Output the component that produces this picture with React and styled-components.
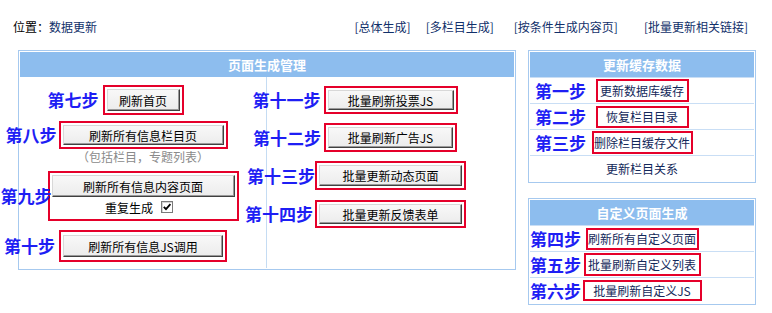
import styled, { createGlobalStyle } from 'styled-components'

const GlobalStyle = createGlobalStyle`
  body {
    margin: 0;
    background: #fff;
    font-family: "Noto Sans CJK SC", "Liberation Sans", sans-serif;
    font-size: 12px;
    color: #000;
  }
`

const Page = styled.div`
  width: 772px;
  height: 313px;
  overflow: hidden;
`

const TopBar = styled.div`
  display: flex;
  align-items: center;
  justify-content: space-between;
  height: 14px;
  margin: 20px 0 16px;
  padding: 0 24px 0 13px;
  line-height: 14px;
`

const Where = styled.div`
  color: #000;
  span {
    color: #11306a;
  }
`

const Links = styled.div`
  display: flex;
`

const TopLink = styled.a`
  color: #11306a;
  text-decoration: none;
  margin-left: ${props => props.$ml || 0}px;
`

const Main = styled.div`
  display: flex;
  align-items: flex-start;
  gap: 12px;
  padding-left: 18px;
`

const Panel = styled.div`
  width: ${props => props.$w}px;
  box-sizing: border-box;
  border: 1px solid #a6c9ef;
  padding: 1px;
  background: #fff;
`

const Header = styled.div`
  height: 25px;
  line-height: 25px;
  background: #8dbdee;
  color: #fff;
  font-weight: bold;
  font-size: 13px;
  text-align: center;
`

const Body = styled.div`
  display: grid;
  grid-template-columns: 247px 1fr;
  height: 191px;
`

const Column = styled.div`
  display: flex;
  flex-direction: column;
  align-items: center;
  box-sizing: border-box;
  border-right: ${props => props.$divider ? '1px solid #c5dcf3' : 'none'};
`

const StepRow = styled.div`
  display: flex;
  align-items: center;
  justify-content: center;
  margin-top: ${props => props.$mt}px;
`

// 标注文字挂在红框左边，不占宽度，红框保持居中
const StepLabel = styled.span`
  position: relative;
  z-index: 1;
  flex: none;
  width: ${props => props.$chars * 17}px;
  margin-left: ${props => -(props.$chars * 17 + props.$gap)}px;
  margin-right: ${props => props.$gap}px;
  font-size: 17px;
  font-weight: bold;
  line-height: 20px;
  color: #1e1ef4;
  white-space: nowrap;
`

const RedBox = styled.div`
  border: 2px solid #e5002a;
  padding: ${props => props.$py || 2}px 2px;
  display: flex;
  flex-direction: column;
`

const Button = styled.button`
  width: ${props => props.$w}px;
  height: ${props => props.$h}px;
  margin: 0;
  padding: 0;
  font-family: inherit;
  font-size: 12px;
  color: #000;
  background: linear-gradient(#f8f8f8, #ececec);
  border: 1px solid;
  border-color: #d8d8d8 #404040 #404040 #d8d8d8;
  box-shadow: inset -1px -1px 0 #9a9a9a;
  cursor: pointer;
`

const Note = styled.div`
  height: 16px;
  line-height: 16px;
  color: #8a8a8a;
`

const CheckRow = styled.div`
  display: flex;
  align-items: center;
  justify-content: center;
  gap: 8px;
  height: 20px;
  padding-right: 8px;
`

const CheckBox = styled.span`
  display: inline-flex;
  align-items: center;
  justify-content: center;
  width: 12px;
  height: 12px;
  box-sizing: border-box;
  border: 1px solid #7a7a7a;
  background: #fff;
  box-shadow: inset 1px 1px 0 #d4d4d4;
`

const Side = styled.div`
  display: flex;
  flex-direction: column;
  gap: 15px;
`

const Row = styled.div`
  display: grid;
  grid-template-columns: minmax(0, 1fr) auto minmax(0, 1fr);
  align-items: center;
  height: 25px;
  border-top: 1px solid #c9def5;
`

const RowLabel = styled.span`
  justify-self: start;
  padding-left: ${props => props.$inset}px;
  font-size: 17px;
  font-weight: bold;
  line-height: 20px;
  color: #1e1ef4;
  white-space: nowrap;
`

const LinkBox = styled.a`
  display: flex;
  align-items: center;
  justify-content: center;
  box-sizing: border-box;
  width: ${props => props.$w}px;
  height: ${props => props.$h}px;
  border: 2px solid #e5002a;
  color: #13285a;
  text-decoration: none;
  white-space: nowrap;
`

const PlainLink = styled.a`
  grid-column: 2;
  color: #13285a;
  text-decoration: none;
`

const leftSteps = [
  { label: '第七步', gap: 4, btn: '刷新首页', w: 73, h: 22, mt: 8 },
  { label: '第八步', gap: 2, btn: '刷新所有信息栏目页', w: 161, h: 20, mt: 6, note: '（包括栏目，专题列表）' },
  { label: '第九步', gap: -4, btn: '刷新所有信息内容页面', w: 183, h: 22, mt: 6, check: true },
  { label: '第十步', gap: 4, btn: '刷新所有信息JS调用', w: 160, h: 22, py: 3, mt: 9 },
]

const rightSteps = [
  { label: '第十一步', gap: 3, btn: '批量刷新投票JS', w: 126, h: 20, mt: 9 },
  { label: '第十二步', gap: 3, btn: '批量刷新广告JS', w: 125, h: 21, mt: 9 },
  { label: '第十三步', gap: 0, btn: '批量更新动态页面', w: 143, h: 21, mt: 9 },
  { label: '第十四步', gap: 2, btn: '批量更新反馈表单', w: 143, h: 20, mt: 10 },
]

const cacheRows = [
  { label: '第一步', text: '更新数据库缓存', w: 93, h: 23 },
  { label: '第二步', text: '恢复栏目目录', w: 93, h: 22 },
  { label: '第三步', text: '删除栏目缓存文件', w: 101, h: 23 },
  { text: '更新栏目关系' },
]

const customRows = [
  { label: '第四步', text: '刷新所有自定义页面', w: 113, h: 22 },
  { label: '第五步', text: '批量刷新自定义列表', w: 117, h: 23 },
  { label: '第六步', text: '批量刷新自定义JS', w: 119, h: 21 },
]

function Step({ s }) {
  return (
    <>
      <StepRow $mt={s.mt}>
        <StepLabel $chars={s.label.length} $gap={s.gap}>{s.label}</StepLabel>
        <RedBox $py={s.py}>
          <Button $w={s.w} $h={s.h}>{s.btn}</Button>
          {s.check && (
            <CheckRow>
              重复生成
              <CheckBox>
                <svg width="10" height="10" viewBox="0 0 10 10">
                  <path d="M1.8 4.8 L4 7.2 L8.4 2.2" fill="none" stroke="#000" strokeWidth="1.8" />
                </svg>
              </CheckBox>
            </CheckRow>
          )}
        </RedBox>
      </StepRow>
      {s.note && <Note>{s.note}</Note>}
    </>
  )
}

function SidePanel({ title, rows, inset }) {
  return (
    <Panel $w={228}>
      <Header>{title}</Header>
      {rows.map((r, i) => (
        <Row key={i}>
          {r.label ? (
            <>
              <RowLabel $inset={inset}>{r.label}</RowLabel>
              <LinkBox href="#" $w={r.w} $h={r.h}>{r.text}</LinkBox>
            </>
          ) : (
            <PlainLink href="#">{r.text}</PlainLink>
          )}
        </Row>
      ))}
    </Panel>
  )
}

export default function App() {
  return (
    <Page>
      <GlobalStyle />
      <TopBar>
        <Where>位置：<span>数据更新</span></Where>
        <Links>
          <TopLink href="#">[总体生成]</TopLink>
          <TopLink href="#" $ml={15}>[多栏目生成]</TopLink>
          <TopLink href="#" $ml={20}>[按条件生成内容页]</TopLink>
          <TopLink href="#" $ml={26}>[批量更新相关链接]</TopLink>
        </Links>
      </TopBar>
      <Main>
        <Panel $w={498}>
          <Header>页面生成管理</Header>
          <Body>
            <Column $divider>
              {leftSteps.map(s => <Step key={s.label} s={s} />)}
            </Column>
            <Column>
              {rightSteps.map(s => <Step key={s.label} s={s} />)}
            </Column>
          </Body>
        </Panel>
        <Side>
          <SidePanel title="更新缓存数据" rows={cacheRows} inset={5} />
          <SidePanel title="自定义页面生成" rows={customRows} inset={0} />
        </Side>
      </Main>
    </Page>
  )
}
